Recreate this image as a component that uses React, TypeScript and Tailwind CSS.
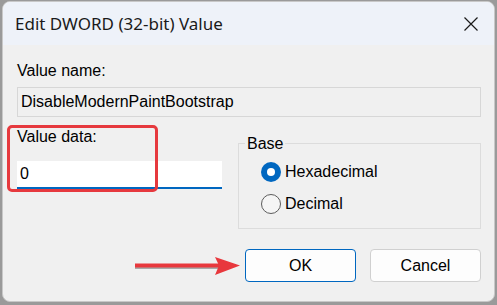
import React from "react";

const dlg = { fontFamily: '"Liberation Sans", Arial, sans-serif' };
const ui = { fontFamily: '"Noto Sans", "Open Sans", sans-serif' };

function Radio({ checked, label }: { checked?: boolean; label: string }) {
  return (
    <div className="flex items-center gap-[4px] h-[20px]">
      {checked ? (
        <span className="w-[20px] h-[20px] rounded-full bg-[#0067c0] flex items-center justify-center">
          <span className="w-[8px] h-[8px] rounded-full bg-white" />
        </span>
      ) : (
        <span className="w-[20px] h-[20px] rounded-full border border-[#5c5c5c] bg-[#f5f5f5]" />
      )}
      <span className="text-[16px] text-black leading-none" style={dlg}>
        {label}
      </span>
    </div>
  );
}

export default function App() {
  return (
    <div className="w-[497px] h-[305px] bg-[#9a9a9a] pl-[2px] pt-[1px] overflow-hidden">
      <div className="w-[493px] h-[301px] rounded-[8px] overflow-hidden bg-[#f0f0f0] border border-[#c8c8c8] flex flex-col">
        {/* title bar */}
        <div className="h-[43px] bg-[#eef2f9] flex items-center justify-between pl-[12px] pr-[15px]">
          <span className="text-[17px] text-[#1a1a1a] pt-[1px]" style={ui}>
            Edit DWORD (32-bit) Value
          </span>
          <svg width="16" height="16" viewBox="0 0 16 16" className="mt-[1px]">
            <path d="M1.5 1.5 L14.5 14.5 M14.5 1.5 L1.5 14.5" stroke="#1a1a1a" strokeWidth="1.2" />
          </svg>
        </div>

        {/* body */}
        <div className="flex-1 flex flex-col pl-[14px] pr-[13px]" style={dlg}>
          <div className="text-[16px] text-black mt-[18px] leading-none">Value name:</div>
          <div className="mt-[8px] h-[30px] border border-[#d7d7d7] bg-[#f0f0f0] flex items-center pl-[3px] text-[16px] text-black">
            DisableModernPaintBootstrap
          </div>

          <div className="flex mt-[8px]">
            <div className="relative w-[205px] pt-[4px]">
              <div className="absolute left-[-10px] top-[0px] w-[151px] h-[67px] rounded-[5px] border-[3px] border-[#e6393e]" />
              <div className="text-[16px] text-black leading-none">Value data:</div>
              <div className="mt-[16px] h-[28px] bg-white border-b-2 border-[#0067c0] flex items-center pl-[3px] text-[16px] text-black">
                0
              </div>
            </div>
            <div className="relative ml-[16px] mt-[18px] w-[243px] h-[86px] border border-[#dcdcdc] pl-[22px] pt-[18px] flex flex-col gap-[12px]">
              <span className="absolute left-[6px] top-[-8px] bg-[#f0f0f0] px-[2px] text-[16px] leading-none text-black">
                Base
              </span>
              <Radio checked label="Hexadecimal" />
              <Radio label="Decimal" />
            </div>
          </div>

          <div className="flex items-center justify-end mt-[20px] gap-[14px]">
            <svg width="106" height="20" viewBox="0 0 106 20" className="mr-[-10px]">
              <rect x="0" y="10" width="84" height="3" fill="#6e6e6e" opacity="0.55" />
              <rect x="0" y="7.5" width="84" height="4" fill="#e8383d" />
              <path d="M80 1 L105 9.5 L80 19 L84 9.5 Z" fill="#e8383d" />
            </svg>
            <button className="w-[111px] h-[33px] rounded-[4px] border border-[#0067c0] bg-[#fdfdfd] text-[16px] text-black" style={dlg}>
              OK
            </button>
            <button className="w-[111px] h-[33px] rounded-[4px] border border-[#d0d0d0] bg-[#fdfdfd] text-[16px] text-black" style={dlg}>
              Cancel
            </button>
          </div>
        </div>
      </div>
    </div>
  );
}
